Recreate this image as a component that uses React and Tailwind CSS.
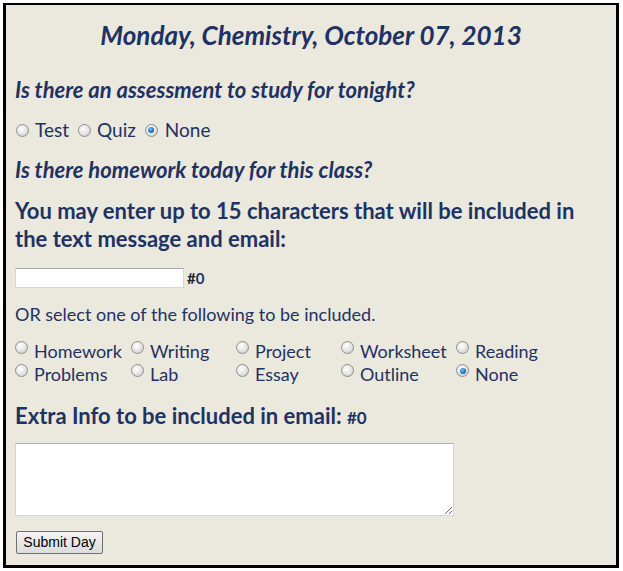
import { useState } from 'react';

const navy = 'text-[#1e3263]';

const Radio = ({ checked, className = '' }) => (
    <span
        className={`inline-block w-[13px] h-[13px] rounded-full border border-[#8f8f8f] bg-[radial-gradient(circle_at_40%_35%,#ffffff_0%,#e8e8e8_45%,#c4c4c4_100%)] relative shrink-0 ${className}`}
    >
        {checked && (
            <span className="absolute left-[2.5px] top-[2.5px] w-[6px] h-[6px] rounded-full bg-[radial-gradient(circle_at_40%_35%,#7cc3f0_0%,#1f78c0_55%,#0b3f73_100%)]" />
        )}
    </span>
);

const GridOption = ({ label, checked }) => (
    <div className="flex items-start gap-[6px] h-[23px]">
        <Radio checked={checked} className="mt-[1px]" />
        <span className="leading-[23px]">{label}</span>
    </div>
);

export default function App() {
    const [count] = useState(0);

    const options = [
        ['Homework', false], ['Writing', false], ['Project', false], ['Worksheet', false], ['Reading', false],
        ['Problems', false], ['Lab', false], ['Essay', false], ['Outline', false], ['None', true],
    ];

    return (
        <div className="bg-white w-[623px] h-[571px] pt-[3px] pl-[3px] font-['Lato','Open_Sans',sans-serif]">
            <div className={`w-[616px] h-[565px] border-[3px] border-t-2 border-black bg-[#ebe8de] px-[9px] ${navy}`}>
                {/* Title */}
                <h1 className="mt-[15px] text-center text-[26px] leading-[30px] font-bold italic">
                    Monday, Chemistry, October 07, 2013
                </h1>

                {/* Assessment */}
                <h2 className="mt-[28px] text-[22px] leading-[24px] font-bold italic">
                    Is there an assessment to study for tonight?
                </h2>
                <div className="mt-[16px] flex items-center text-[19px] leading-[24px]">
                    <Radio className="ml-[1px]" />
                    <span className="ml-[6px]">Test</span>
                    <Radio className="ml-[9px]" />
                    <span className="ml-[6px]">Quiz</span>
                    <Radio checked className="ml-[9px]" />
                    <span className="ml-[7px]">None</span>
                </div>

                {/* Homework */}
                <h2 className="mt-[16px] text-[22px] leading-[24px] font-bold italic">
                    Is there homework today for this class?
                </h2>
                <p className="mt-[15px] text-[22px] leading-[28px] font-bold">
                    You may enter up to 15 characters that will be included in the text message and email:
                </p>
                <div className="mt-[15px] flex items-center h-[20px]">
                    <input
                        type="text"
                        className="w-[169px] h-[20px] bg-white border border-[#d6d6d6] border-t-[#a8a8a8] outline-none"
                    />
                    <span className="ml-[3px] text-[15px] font-bold leading-[20px]">
                        <span className="text-[#222]">#</span>{count}
                    </span>
                </div>
                <p className="mt-[15px] text-[18px] leading-[22px]">OR select one of the following to be included.</p>
                <div className="mt-[15px] grid grid-cols-[116px_105px_105px_115px_1fr] text-[18px]">
                    {options.map(([label, checked]) => (
                        <GridOption key={label + checked} label={label} checked={checked} />
                    ))}
                </div>

                {/* Extra info */}
                <h2 className="mt-[18px] text-[22px] leading-[24px] font-bold">
                    Extra Info to be included in email: <span className="text-[17px]">#0</span>
                </h2>
                <textarea className="mt-[13px] block w-[439px] h-[73px] bg-white border border-[#d4d4d4] border-t-[#b0b0b0] outline-none" />
                <button
                    type="button"
                    className="mt-[15px] ml-[1px] w-[87px] h-[23px] rounded-[2px] border border-[#707070] bg-[linear-gradient(#f4f4f4,#dcdcdc)] text-black text-[14px] font-['Liberation_Sans',Arial,sans-serif] leading-[21px]"
                >
                    Submit Day
                </button>
            </div>
        </div>
    );
}
